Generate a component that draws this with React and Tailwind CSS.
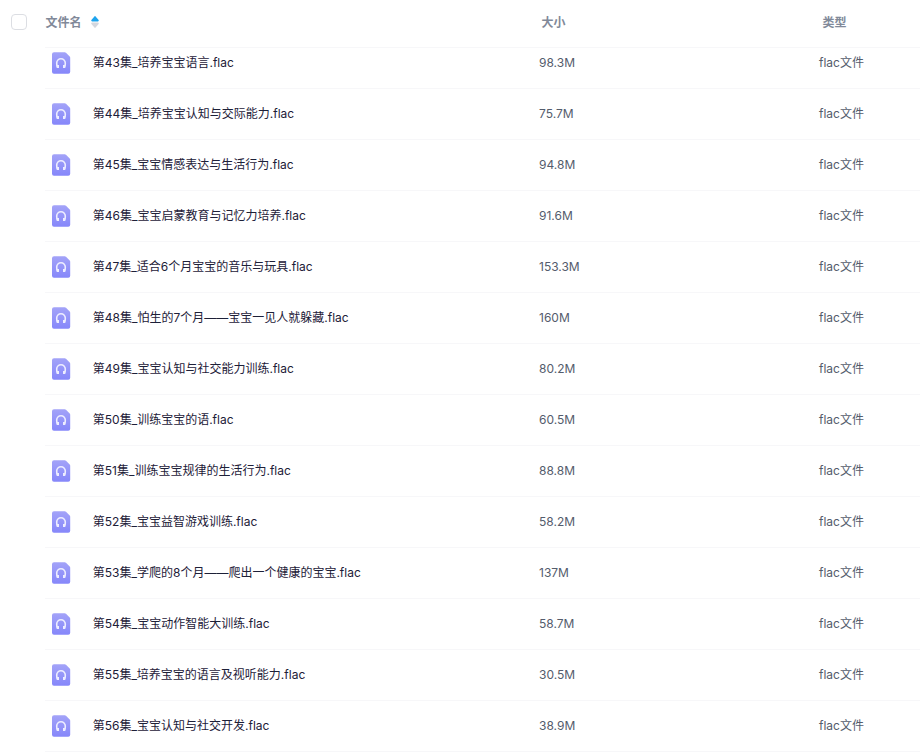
import React from 'react';

const FILES = [
  { name: '第43集_培养宝宝语言.flac', size: '98.3M' },
  { name: '第44集_培养宝宝认知与交际能力.flac', size: '75.7M' },
  { name: '第45集_宝宝情感表达与生活行为.flac', size: '94.8M' },
  { name: '第46集_宝宝启蒙教育与记忆力培养.flac', size: '91.6M' },
  { name: '第47集_适合6个月宝宝的音乐与玩具.flac', size: '153.3M' },
  { name: '第48集_怕生的7个月——宝宝一见人就躲藏.flac', size: '160M' },
  { name: '第49集_宝宝认知与社交能力训练.flac', size: '80.2M' },
  { name: '第50集_训练宝宝的语.flac', size: '60.5M' },
  { name: '第51集_训练宝宝规律的生活行为.flac', size: '88.8M' },
  { name: '第52集_宝宝益智游戏训练.flac', size: '58.2M' },
  { name: '第53集_学爬的8个月——爬出一个健康的宝宝.flac', size: '137M' },
  { name: '第54集_宝宝动作智能大训练.flac', size: '58.7M' },
  { name: '第55集_培养宝宝的语言及视听能力.flac', size: '30.5M' },
  { name: '第56集_宝宝认知与社交开发.flac', size: '38.9M' },
];

function AudioFileIcon() {
  return (
    <svg width="19" height="22" viewBox="0 0 19 22" className="shrink-0">
      <defs>
        <linearGradient id="audio-bg" x1="0" y1="0" x2="0" y2="1">
          <stop offset="0" stopColor="#a3a3f8" />
          <stop offset="1" stopColor="#8687fa" />
        </linearGradient>
      </defs>
      <path d="M2 .2h10.700c.5 0 .9.200 1.300.5l3.700 3.700c.3.300.5.800.5 1.300v14a2 2 0 0 1-2 2H2a2 2 0 0 1-2-2V2.200a2 2 0 0 1 2-2z" fill="url(#audio-bg)" />
      <path d="M7 15.300H5.400C4.800 14 4.700 12.600 4.700 11a4.300 4.300 0 0 1 8.600 0c0 1.600-.1 3-.7 4.300H11" fill="none" stroke="#ededff" strokeWidth="1.600" />
      <path d="M5 13h2v2.500H5zM11 13h2v2.500h-2z" fill="#ededff" />
    </svg>
  );
}

function FileRow({ name, size }) {
  return (
    <div className="ml-[45px] flex h-[51px] shrink-0 items-center border-b border-[#f7f7f9] text-xs">
      <div className="flex w-[494px] items-center pl-[7px]">
        <AudioFileIcon />
        <span className="ml-[21.8px] whitespace-nowrap text-[#1d2038]">{name}</span>
      </div>
      <span className="w-[280px] text-[#545c6c]">{size}</span>
      <span className="text-[#545c6c]">flac文件</span>
    </div>
  );
}

export default function App() {
  return (
    <div className="flex h-[753px] w-[920px] flex-col overflow-hidden bg-white font-[Inter,'Noto_Sans_CJK_SC',sans-serif]">
      <div className="relative z-10 flex h-12 shrink-0 bg-white text-xs font-semibold text-[#818999]">
        <span className="ml-[11px] mt-3.5 size-4 shrink-0 rounded border border-[#dcdee3]" />
        <div className="ml-[18px] flex grow items-center border-b border-[#f7f7f9] pb-0.5">
          <div className="flex w-[496px] items-center gap-[9.5px] pl-[0.5px]">
            文件名
            <svg width="8" height="12" viewBox="0 0 8 12" className="-mt-0.5">
              <path d="M3.400.4a.8.800 0 0 1 1.200 0l3 3.500c.4.600.1 1.500-.6 1.500H1c-.7 0-1-.9-.6-1.500z" fill="#1da4ee" />
              <path d="M3.400 11.600a.8.800 0 0 0 1.200 0l3-3.500c.4-.6.100-1.500-.6-1.500H1c-.7 0-1 .9-.6 1.500z" fill="#d4d7de" />
            </svg>
          </div>
          <span className="w-[281px] pl-[0.5px]">大小</span>
          <span className="pl-[0.5px]">类型</span>
        </div>
      </div>
      <div className="-mt-[10px] flex flex-col">
        {FILES.map((file) => (
          <FileRow key={file.name} {...file} />
        ))}
      </div>
    </div>
  );
}
